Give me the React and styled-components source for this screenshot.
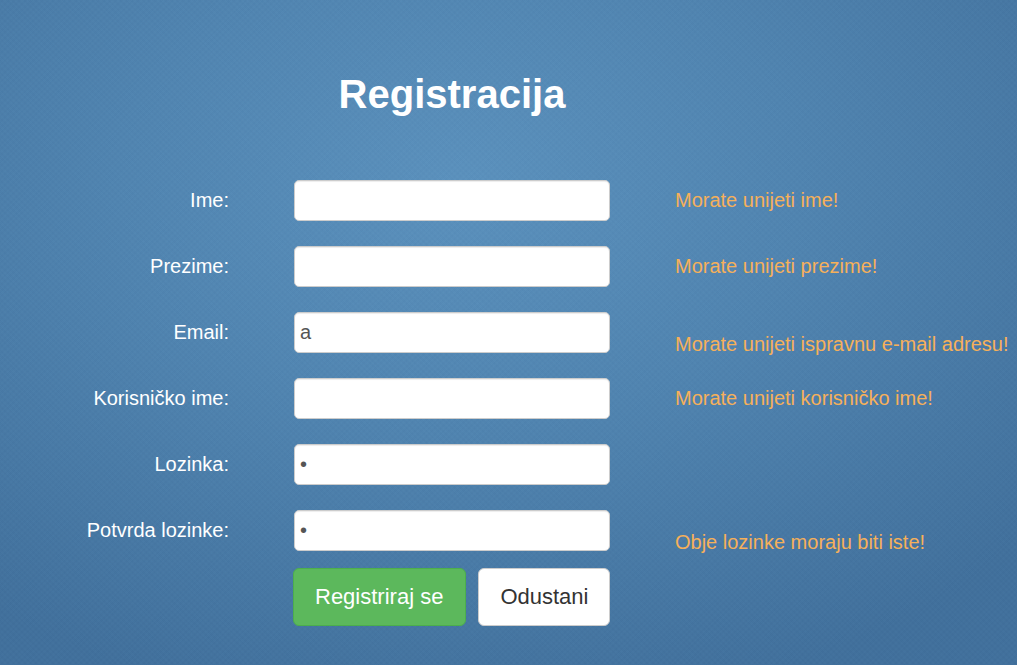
import styled, { createGlobalStyle } from "styled-components";

const GlobalStyle = createGlobalStyle`
   html, body {
      margin: 0;
      padding: 0;
   }
   body {
      font-family: "Liberation Sans", Arial, sans-serif;
   }
`;

const Page = styled.div`
   min-height: 100vh;
   box-sizing: border-box;
   padding-top: 72px;
   background:
      repeating-linear-gradient(45deg, rgba(255, 255, 255, 0.008) 0 2px, rgba(0, 0, 0, 0.008) 2px 4px),
      repeating-linear-gradient(-45deg, rgba(255, 255, 255, 0.008) 0 2px, rgba(0, 0, 0, 0.008) 2px 4px),
      radial-gradient(ellipse 75% 80% at 45% 28%, #5b91bd 0%, #5084b0 45%, #41709c 100%);
   overflow: hidden;
`;

const Form = styled.form`
   display: grid;
   grid-template-columns: 229px 316px auto;
   column-gap: 65px;
   row-gap: 25px;
   align-items: center;
`;

const Title = styled.h1`
   grid-column: 2;
   justify-self: center;
   margin: 0 0 38px;
   font-size: 40px;
   line-height: 45px;
   font-weight: bold;
   color: #fff;
`;

const Label = styled.label`
   grid-column: 1;
   text-align: right;
   font-size: 20px;
   color: #fff;
`;

const Input = styled.input`
   grid-column: 2;
   box-sizing: border-box;
   width: 316px;
   height: 41px;
   padding: 0 5px;
   border: 1px solid #ccc;
   border-radius: 5px;
   background: #fff;
   box-shadow: inset 0 1px 1px rgba(0, 0, 0, 0.075);
   font-family: "Liberation Sans", Arial, sans-serif;
   font-size: 20px;
   color: #555;
   outline: none;
`;

const Error = styled.span`
   grid-column: 3;
   font-size: 20px;
   color: #f6b05a;
   white-space: nowrap;
   align-self: ${(p) => (p.$low ? "end" : "center")};
   margin-bottom: ${(p) => (p.$low ? "-3px" : "0")};
`;

const Buttons = styled.div`
   grid-column: 2;
   display: flex;
   gap: 12px;
   margin-top: -8px;
   margin-left: -1px;
`;

const Button = styled.button`
   flex: none;
   box-sizing: border-box;
   height: 58px;
   padding: ${(p) => (p.$primary ? "0 22px 0 21px" : "0 21px")};
   border-radius: 6px;
   white-space: nowrap;
   font-family: "Liberation Sans", Arial, sans-serif;
   font-size: 22px;
   cursor: pointer;
   border: 1px solid ${(p) => (p.$primary ? "#4cae4c" : "#ccc")};
   background: ${(p) => (p.$primary ? "#5cb85c" : "#fff")};
   color: ${(p) => (p.$primary ? "#fff" : "#333")};
`;

const fields = [
   { label: "Ime:", type: "text", value: "", error: "Morate unijeti ime!" },
   { label: "Prezime:", type: "text", value: "", error: "Morate unijeti prezime!" },
   { label: "Email:", type: "text", value: "a", error: "Morate unijeti ispravnu e-mail adresu!", low: true },
   { label: "Korisničko ime:", type: "text", value: "", error: "Morate unijeti korisničko ime!" },
   { label: "Lozinka:", type: "password", value: "a", error: "" },
   { label: "Potvrda lozinke:", type: "password", value: "a", error: "Obje lozinke moraju biti iste!", low: true },
];

export default function App() {
   return (
      <Page>
         <GlobalStyle />
         <Form onSubmit={(e) => e.preventDefault()}>
            <Title>Registracija</Title>
            {fields.map((f, i) => [
               <Label key={`l-${i}`}>{f.label}</Label>,
               <Input key={`i-${i}`} type={f.type} defaultValue={f.value} />,
               <Error key={`e-${i}`} $low={f.low}>
                  {f.error}
               </Error>,
            ])}
            <Buttons>
               <Button $primary type="submit">Registriraj se</Button>
               <Button type="button">Odustani</Button>
            </Buttons>
         </Form>
      </Page>
   );
}
